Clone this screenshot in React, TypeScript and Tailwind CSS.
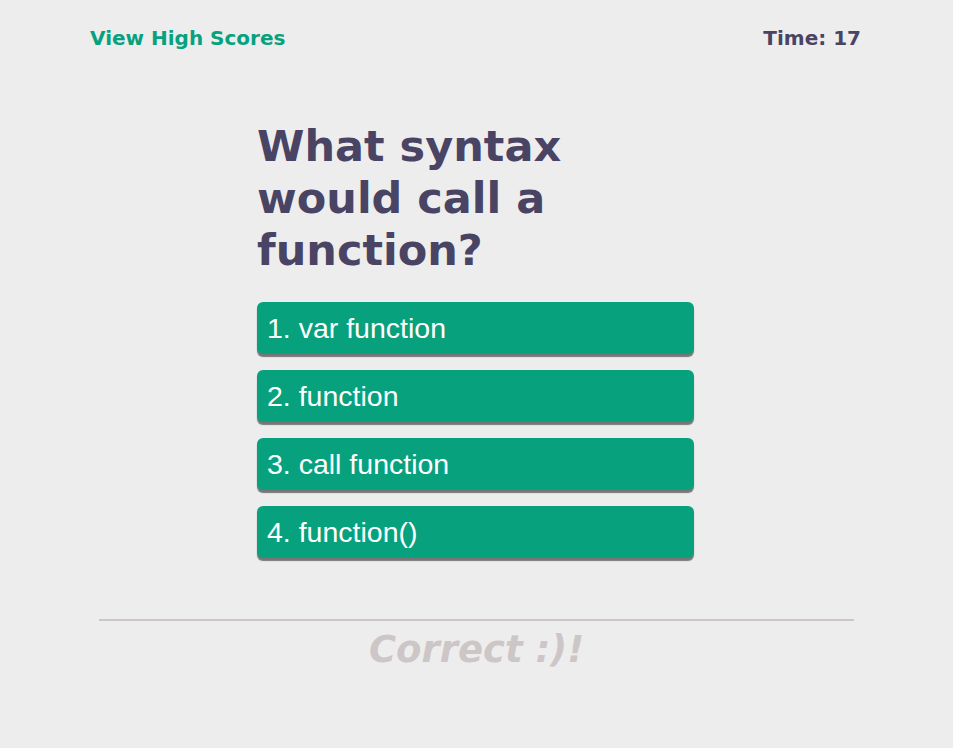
import React from 'react';

const choices = ['1. var function', '2. function', '3. call function', '4. function()'];

export default function App() {
  return (
    <div className="min-h-[748px] w-full bg-[#ededed] font-['DejaVu_Sans',Verdana,sans-serif]">
      <header className="flex items-center justify-between pl-[90px] pr-[92px] pt-[23px]">
        <a className="text-[20px] font-bold text-[#08a17e]">View High Scores</a>
        <span className="text-[20px] font-bold text-[#4a4464]">Time: 17</span>
      </header>

      <main className="ml-[257px] mt-[67px] w-[437px]">
        <h1 className="w-[340px] text-[43px] font-bold leading-[52px] text-[#4a4464]">
          What syntax would call a function?
        </h1>
        <div className="mt-[26px] flex flex-col gap-[16px]">
          {choices.map((c) => (
            <button
              key={c}
              className="flex h-[52px] w-full items-center rounded-[6px] bg-[#08a17e] pl-[10px] text-left font-['Liberation_Sans',Arial,sans-serif] text-[28.5px] text-white shadow-[0_3px_1px_#777777]"
            >
              {c}
            </button>
          ))}
        </div>
      </main>

      <footer className="mx-auto mt-[61px] w-[755px]">
        <div className="h-[2px] bg-[#cdc6c6]" />
        <p className="mt-[1px] text-center text-[37px] font-bold italic text-[#cdc6c6]">Correct :)!</p>
      </footer>
    </div>
  );
}
